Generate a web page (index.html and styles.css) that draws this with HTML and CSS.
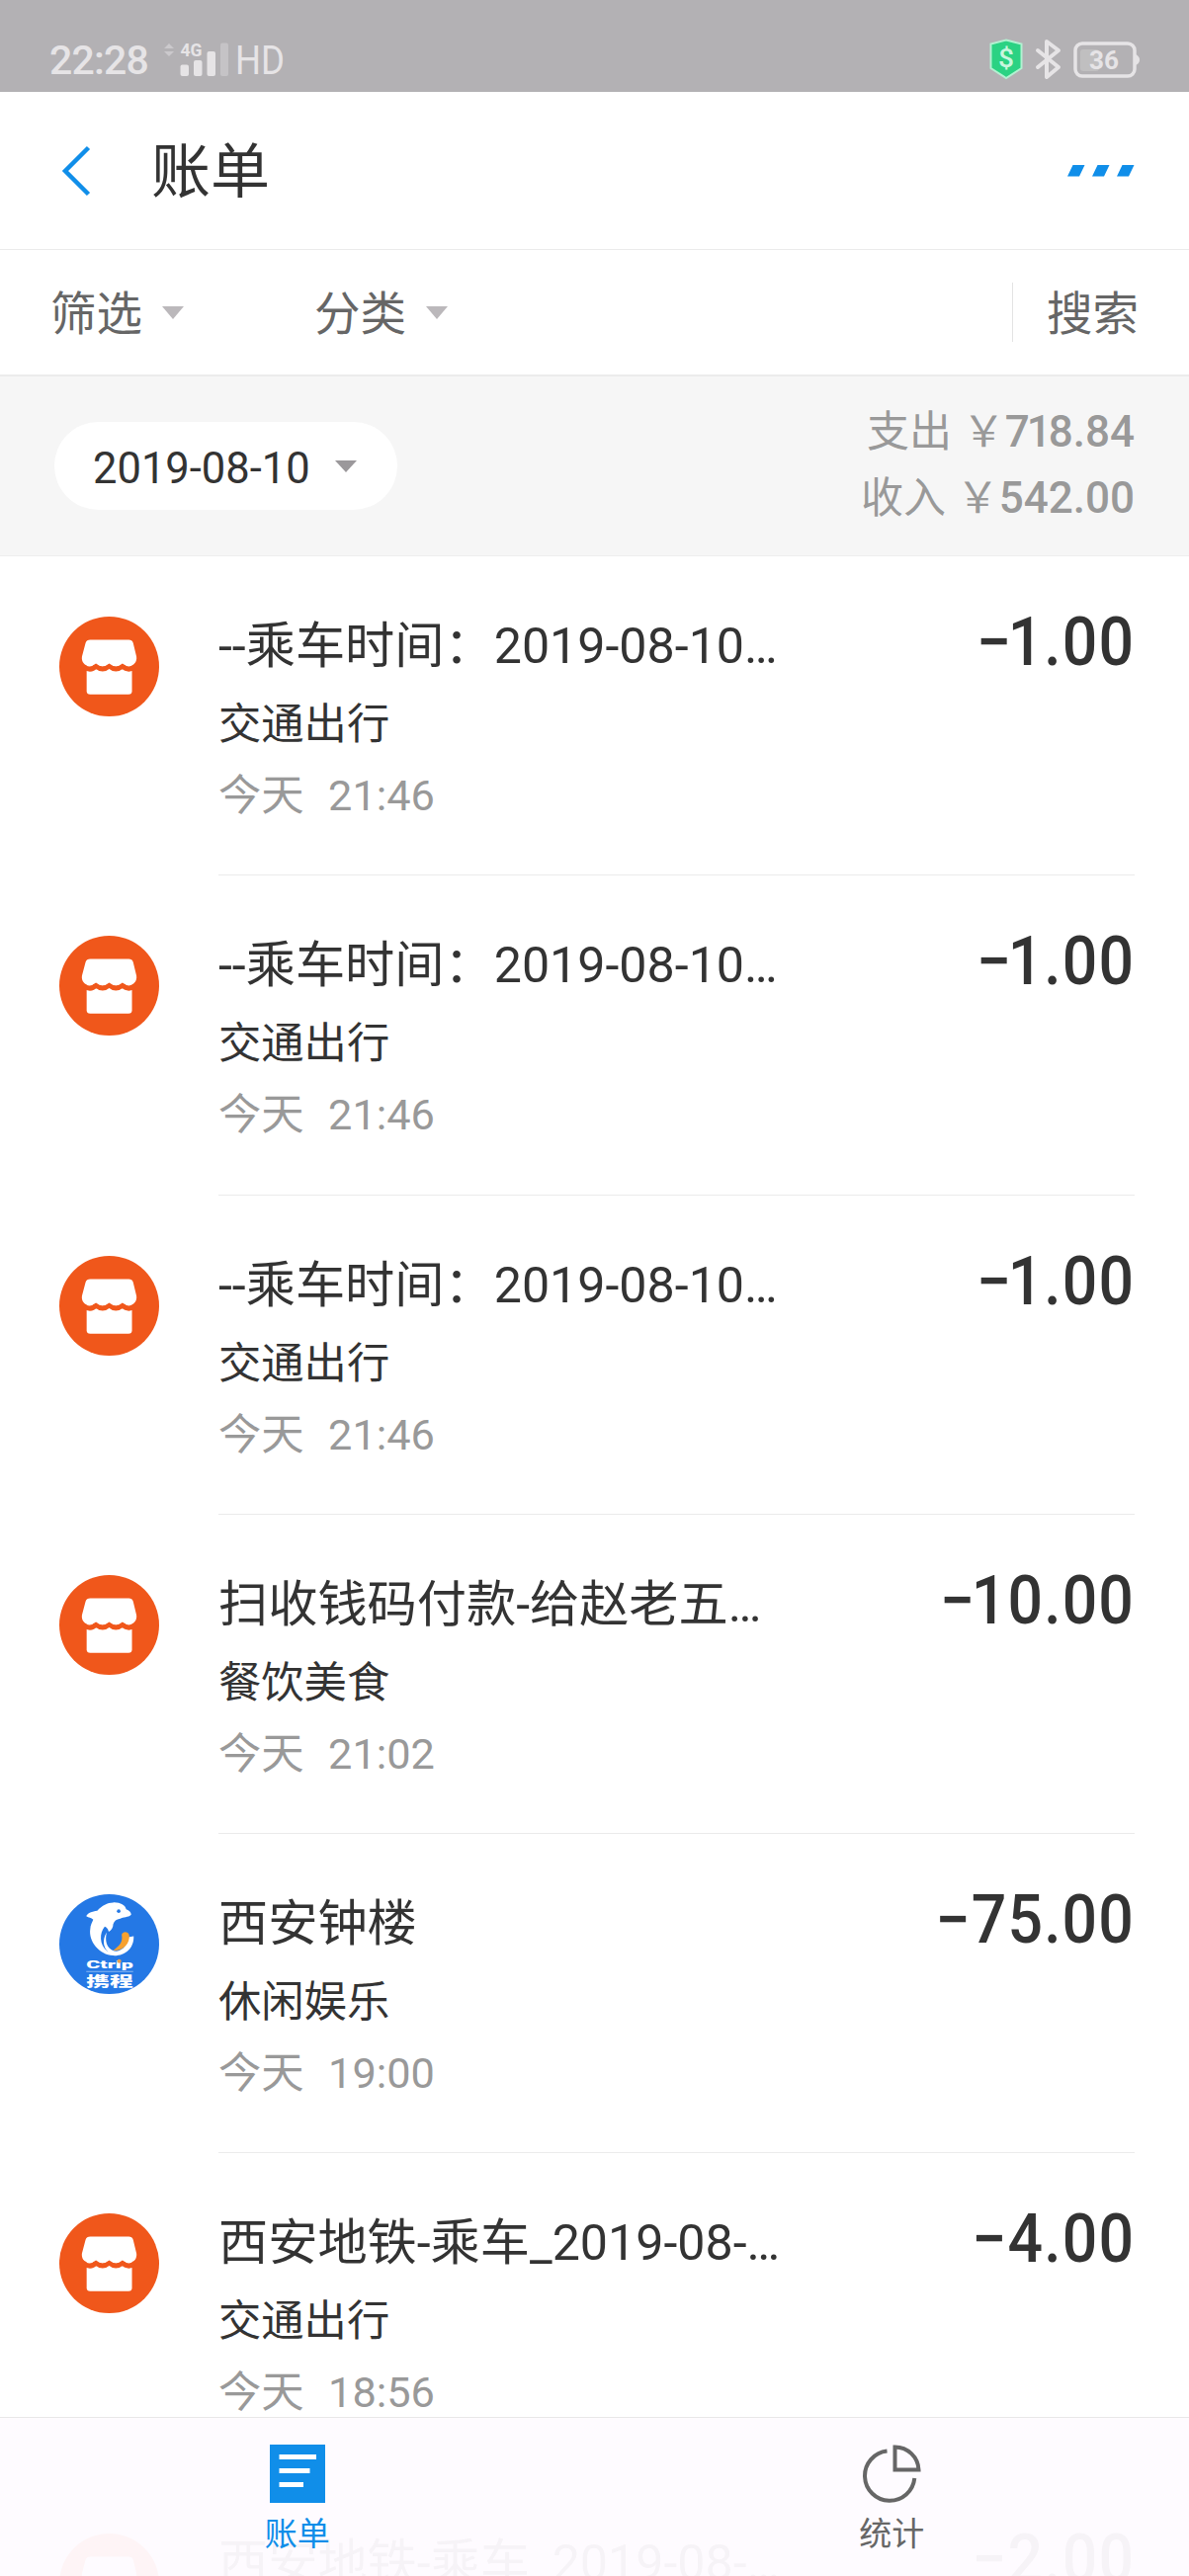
FILE: index.html
```
<!DOCTYPE html>
<html lang="zh-CN">

<head>
    <meta charset="UTF-8">
    <meta name="viewport" content="width=device-width, initial-scale=1.0">
    <title>账单</title>
    <link rel="stylesheet" href="styles.css">
</head>

<body>
    <!-- 公用图标 -->
    <svg class="defs" width="0" height="0">
        <symbol id="shop" viewBox="0 0 100 100">
            <circle cx="50" cy="50" r="50" fill="#f0571b" />
            <path d="M27.4 48H72.8V74.500Q72.800 78 69.300 78H31Q27.400 78 27.400 74.500Z" fill="#fff" />
            <path d="M25 50.500Q31.500 55 36.700 49.500Q43.300 55 50 49.500Q56.700 55 63.300 49.500Q69 55 75 50.500" fill="none" stroke="#f0571b" stroke-width="5" />
            <path d="M31 23.300H69.500Q73 23.300 74 26.500L77.300 40C78.500 48 70 52.500 63.300 47Q56.700 52.500 50 47Q43.300 52.500 36.700 47C30 52.500 21.500 48 22.700 40L26.300 26.500Q27.300 23.300 31 23.300Z" fill="#fff" />
        </symbol>
    </svg>

    <div class="status">
        <span class="time">22:28</span>
        <svg class="signal" width="52" height="40" viewBox="0 0 52 40">
            <path d="M0 7L5 2L10 7ZM0 10L5 15L10 10Z" fill="#cbc9cc" />
            <text x="16.500" y="15" font-size="19" font-weight="700" textLength="22" lengthAdjust="spacingAndGlyphs">4G</text>
            <rect x="16.500" y="23.500" width="8.500" height="11.500" rx="2" />
            <rect x="30" y="19" width="8.500" height="16" rx="2" />
            <rect x="43.500" y="10" width="8.500" height="25" rx="2" />
        </svg>
        <svg class="weak" width="8" height="40" viewBox="0 0 8 40">
            <rect y="1.500" width="8" height="33.500" rx="2" />
        </svg>
        <svg class="hd" width="52" height="50" viewBox="0 0 52 50">
            <text x="0" y="40.500" font-size="41" textLength="50" lengthAdjust="spacingAndGlyphs">HD</text>
        </svg>
        <svg class="shield" width="34" height="42" viewBox="0 0 34 42">
            <path d="M17 1.500L32.500 5.500V30L17 40L1.500 30V5.500Z" fill="#2bd283" stroke="#b2f1d1" stroke-width="2" />
            <text x="9" y="29" font-size="25" font-weight="500" fill="#c8f6de" textLength="16" lengthAdjust="spacingAndGlyphs">$</text>
        </svg>
        <svg class="bluetooth" width="28" height="44" viewBox="0 0 28 44">
            <path d="M3 13L24 30L12 40V4L24 13L3 30" fill="none" stroke="#e6e4e6" stroke-width="4" stroke-linecap="round" stroke-linejoin="round" />
        </svg>
        <svg class="battery" width="68" height="38" viewBox="0 0 68 38">
            <rect x="7" y="8" width="19" height="22" rx="3" fill="#c0bfc0" />
            <rect x="2" y="2" width="60" height="33" rx="7" fill="none" stroke="#e6e4e6" stroke-width="3.500" />
            <path d="M63 13Q67 15 67 18.500Q67 22 63 24Z" />
            <text x="16" y="28" font-size="26" font-weight="700" textLength="30" lengthAdjust="spacingAndGlyphs">36</text>
        </svg>
    </div>

    <div class="header">
        <svg class="back" width="30" height="52" viewBox="0 0 30 52">
            <path d="M27.500 2.500L4 26L27.500 49.500" fill="none" stroke="#108ee9" stroke-width="4.500" />
        </svg>
        <h1>账单</h1>
        <svg class="more" width="68" height="12" viewBox="0 0 68 12">
            <path d="M5.500 0H17.500L12 11.500H0ZM30.500 0H42.500L37 11.500H25ZM55.500 0H67.500L62 11.500H50Z" fill="#108ee9" />
        </svg>
    </div>

    <div class="filter">
        <div class="filter_item">筛选<i class="arrow"></i></div>
        <div class="filter_item">分类<i class="arrow"></i></div>
        <div class="search">搜索</div>
    </div>

    <div class="summary">
        <div class="date">2019-08-10<i class="arrow"></i></div>
        <div class="total">
            <p>支出 <span class="yen">￥</span><b>7<span class="one">1</span>8.84</b></p>
            <p>收入 <span class="yen">￥</span><b>542.00</b></p>
        </div>
    </div>

    <ul class="list">
        <li>
            <svg class="logo"><use href="#shop" /></svg>
            <div class="info">
                <div class="name">--乘车时间：2019-08-10…</div>
                <div class="type">交通出行</div>
                <div class="when">今天&nbsp; 21:46</div>
            </div>
            <div class="money"><b>−<span class="one">1</span>.00</b></div>
        </li>
        <li>
            <svg class="logo"><use href="#shop" /></svg>
            <div class="info">
                <div class="name">--乘车时间：2019-08-10…</div>
                <div class="type">交通出行</div>
                <div class="when">今天&nbsp; 21:46</div>
            </div>
            <div class="money"><b>−<span class="one">1</span>.00</b></div>
        </li>
        <li>
            <svg class="logo"><use href="#shop" /></svg>
            <div class="info">
                <div class="name">--乘车时间：2019-08-10…</div>
                <div class="type">交通出行</div>
                <div class="when">今天&nbsp; 21:46</div>
            </div>
            <div class="money"><b>−<span class="one">1</span>.00</b></div>
        </li>
        <li>
            <svg class="logo"><use href="#shop" /></svg>
            <div class="info">
                <div class="name">扫收钱码付款-给赵老五…</div>
                <div class="type">餐饮美食</div>
                <div class="when">今天&nbsp; 21:02</div>
            </div>
            <div class="money"><b>−<span class="one">1</span>0.00</b></div>
        </li>
        <li>
            <!-- 携程 -->
            <svg class="logo" viewBox="0 0 100 100">
                <circle cx="50" cy="50" r="50" fill="#2478e5" />
                <path d="M27 22C28 19 33 17 38 16.500C43 11 48 8.500 54 8.300C61 8 66 11 67 15C70 16 72 18 72 20.500C69 23.500 64 22.500 61 24.500C57 25 55 27 54 30C54 33.500 52 36.500 49.500 37.500C48.500 34 47 33 45.500 32.500C40 39 40 51 48 57C58 62 68 54 69 43L74.500 42C75 54 66 62 54 61.500C40 61 29 47 31 35C31 31 33 28 34 25.500C32 23.500 29.500 23.500 27 22Z" fill="#fff" />
                <path d="M47.500 38C45.500 46 47 54 55 57C61 58 67 53 70 45L72 50C68 58 60 61 53 60C43.500 56 42.500 46 47.500 38Z" fill="#fff" />
                <path d="M62.500 40.500C63.500 37 69 37 70 41C71 49 64 57 54 56.500C55 55.500 56.500 54.500 58 53C62 49.500 63.500 46 62.500 40.500Z" fill="#f7a12f" />
                <circle cx="59.500" cy="17" r="1.800" fill="#2478e5" />
                <text class="ctrip" x="27" y="74.300" font-size="10.500" textLength="47" lengthAdjust="spacingAndGlyphs">Ctrip</text>
                <circle cx="60" cy="67" r="2" fill="#e9a04d" />
                <path d="M27 77.500H74" stroke="#8bb8f1" />
                <text class="ctrip" x="27" y="92" font-size="14" textLength="47" lengthAdjust="spacingAndGlyphs">携程</text>
            </svg>
            <div class="info">
                <div class="name">西安钟楼</div>
                <div class="type">休闲娱乐</div>
                <div class="when">今天&nbsp; 19:00</div>
            </div>
            <div class="money"><b>−75.00</b></div>
        </li>
        <li>
            <svg class="logo"><use href="#shop" /></svg>
            <div class="info">
                <div class="name">西安地铁-乘车_2019-08-…</div>
                <div class="type">交通出行</div>
                <div class="when">今天&nbsp; 18:56</div>
            </div>
            <div class="money"><b>−4.00</b></div>
        </li>
        <li>
            <svg class="logo"><use href="#shop" /></svg>
            <div class="info">
                <div class="name">西安地铁-乘车_2019-08-…</div>
            </div>
            <div class="money"><b>−2.00</b></div>
        </li>
    </ul>

    <div class="tabbar">
        <div class="tab active">
            <svg width="60" height="60" viewBox="0 0 60 60">
                <rect x="2" y="1" width="56" height="59" fill="#108ee9" />
                <path d="M11.500 13.500H49M11.500 27.500H42.500M11.500 41.500H36" stroke="#fff" stroke-width="5" />
            </svg>
            <span>账单</span>
        </div>
        <div class="tab">
            <svg width="60" height="60" viewBox="0 0 60 60">
                <path d="M25.500 7.500A25.200 25.200 0 1 0 53.300 35" fill="none" stroke="#666" stroke-width="4" />
                <path d="M33.500 3.500V26.500H57.500A24 24 0 0 0 33.500 3.500Z" fill="none" stroke="#666" stroke-width="4" />
            </svg>
            <span>统计</span>
        </div>
    </div>
</body>

</html>
```
FILE: styles.css
```
* {
    margin: 0;
    padding: 0;
    box-sizing: border-box;
}

body {
    position: relative;
    display: flex;
    flex-direction: column;
    height: 2607px;
    background: #fff;
    color: #333;
    font-family: Roboto, "Noto Sans CJK SC", sans-serif;
}

svg {
    display: block;
    flex-shrink: 0;
}

.defs {
    position: absolute;
}

/* 状态栏 */
.status {
    display: flex;
    flex-shrink: 0;
    height: 93px;
    padding: 0 49px 0 50px;
    background: #b3b1b4;
    color: #e6e4e6;
}

.status svg {
    fill: #e6e4e6;
    margin-top: 42px;
}

.status .time {
    width: 116px;
    line-height: 50px;
    margin-top: 36px;
    font-size: 41px;
    font-weight: 500;
    letter-spacing: -0.8px;
}

.status .weak {
    margin-left: 5px;
    fill: #c5c3c6;
}

.status .hd {
    margin: 34px 0 0 7px;
}

.status .shield {
    margin: 39px 12px 0 auto;
}

.status .bluetooth {
    margin: 38px 11px 0 0;
}

/* 标题 */
.header {
    display: flex;
    flex-shrink: 0;
    align-items: center;
    height: 160px;
    padding: 0 55px 0 62px;
    border-bottom: 1px solid #ebebeb;
}

.header h1 {
    margin: 4px 0 0 61px;
    font-size: 60px;
    font-weight: 400;
    line-height: 80px;
}

.header .more {
    margin-left: auto;
}

/* 筛选 */
.filter {
    display: flex;
    flex-shrink: 0;
    align-items: center;
    height: 128px;
    padding: 0 51px;
    border-bottom: 2px solid #ececec;
    color: #666;
    font-size: 46.5px;
    line-height: 60px;
}

.filter_item {
    display: flex;
    align-items: center;
    width: 267px;
    padding-top: 3px;
}

.arrow {
    border: 11.5px solid transparent;
    border-top: 13px solid #bbb8bb;
    border-bottom: 0;
    margin-left: 20px;
}

.filter .arrow {
    margin-top: -3px;
}

.search {
    height: 60px;
    line-height: 65px;
    margin-left: auto;
    padding-left: 34px;
    border-left: 1px solid #e3e3e3;
}

/* 月汇总 */
.summary {
    display: flex;
    flex-shrink: 0;
    justify-content: space-between;
    height: 182px;
    padding: 23px 55px 0;
    background: #f6f6f6;
    border-bottom: 1px solid #eee;
}

.date {
    display: flex;
    align-items: center;
    width: 347px;
    height: 89px;
    margin-top: 23px;
    padding: 5px 0 0 39px;
    border-radius: 45px;
    background: #fff;
    font-size: 43.5px;
}

.date .arrow {
    margin: -5px 0 0 25px;
    border-top: 12px solid #9b989b;
}

.total {
    color: #999;
    font-size: 43px;
    line-height: 67px;
    text-align: right;
}

.total b {
    font-size: 44px;
    font-weight: 500;
}

.total .one {
    margin: 0 -3px;
}

/* 账单列表 */
.list {
    flex: 1;
    min-height: 0;
    overflow: hidden;
    list-style: none;
}

.list li {
    display: flex;
    height: 323.25px;
    padding: 0 55px 0 60px;
}

.logo {
    width: 101px;
    height: 101px;
    margin-top: 61px;
}

.info {
    flex: 1;
    margin-left: 60px;
    padding-top: 51px;
    border-bottom: 1px solid #ebebeb;
    white-space: nowrap;
}

.name {
    font-size: 50.2px;
    line-height: 80px;
}

.type {
    font-size: 43.3px;
    line-height: 79px;
}

.when {
    color: #999;
    font-size: 43.3px;
    line-height: 65px;
    word-spacing: 1.5px;
}

.money {
    padding-top: 47px;
    border-bottom: 1px solid #ebebeb;
    font-size: 68px;
    line-height: 80px;
}

/* 金额数字窄一些 */
.money b {
    display: block;
    font-weight: 500;
    letter-spacing: 1.2px;
    transform: scaleX(.92);
    transform-origin: right;
}

.money .one {
    margin-left: -5px;
}

.ctrip {
    fill: #fff;
    font-weight: 900;
}

/* 底部导航浮在列表上面 */
.tabbar {
    position: absolute;
    left: 0;
    bottom: 0;
    display: flex;
    width: 100%;
    height: 161px;
    background: rgba(254, 251, 255, .96);
    border-top: 1px solid #e8e8e8;
}

.tab {
    flex: 1;
    display: flex;
    flex-direction: column;
    align-items: center;
    padding-top: 26px;
    color: #666;
    font-size: 33px;
    line-height: 40px;
}

.tab span {
    margin-top: 12px;
}

.active {
    color: #108ee9;
}
```
